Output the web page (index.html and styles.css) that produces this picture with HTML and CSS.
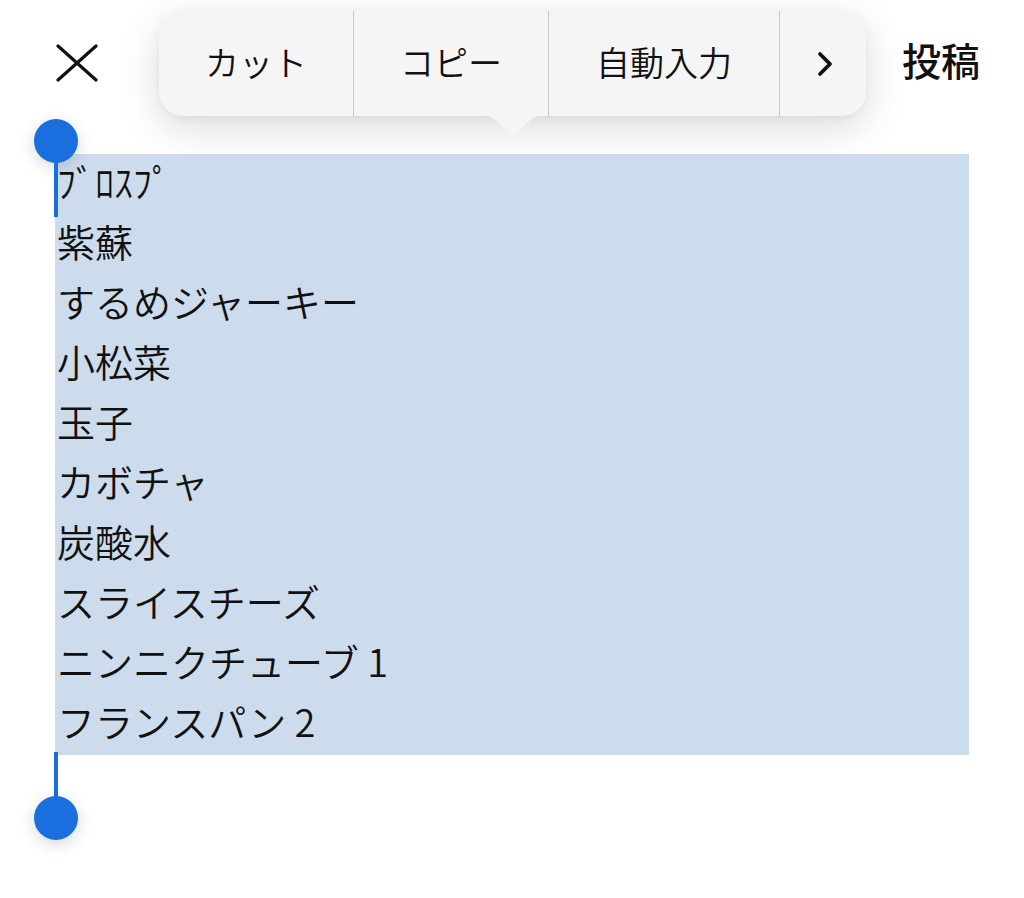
FILE: index.html
```html
<!DOCTYPE html>
<html lang="ja">
<head>
  <meta charset="UTF-8">
  <meta name="viewport" content="width=device-width, initial-scale=1.0">
  <title>投稿</title>
  <link rel="stylesheet" href="styles.css">
</head>
<body>
  <div class="header">
    <button class="close-btn" type="button" aria-label="閉じる">
      <svg width="42" height="38" viewBox="0 0 42 38">
        <path d="M2 2 L40 36 M40 2 L2 36" stroke="#111" stroke-width="3.2" stroke-linecap="round" fill="none"/>
      </svg>
    </button>
    <button class="post-btn" type="button">投稿</button>
  </div>

  <div class="edit-menu">
    <div class="menu-item">カット</div>
    <div class="menu-item">コピー</div>
    <div class="menu-item">自動入力</div>
    <div class="menu-item more">
      <svg width="18" height="26" viewBox="0 0 18 26">
        <path d="M4 3 L14 13 L4 23" stroke="#111" stroke-width="3.8" stroke-linecap="round" stroke-linejoin="round" fill="none"/>
      </svg>
    </div>
    <svg class="menu-arrow" width="70" height="22" viewBox="0 0 70 22">
      <path d="M0 0 L70 0 C58 0 54 3 48 9 L39 18 C36 21 34 21 31 18 L22 9 C16 3 12 0 0 0 Z" fill="#f5f5f5"/>
    </svg>
  </div>

  <div class="editor">
    <div class="selection">
      <div class="line">ﾌﾞﾛｽﾌﾟ</div>
      <div class="line">紫蘇</div>
      <div class="line">するめジャーキー</div>
      <div class="line">小松菜</div>
      <div class="line">玉子</div>
      <div class="line">カボチャ</div>
      <div class="line">炭酸水</div>
      <div class="line">スライスチーズ</div>
      <div class="line">ニンニクチューブ 1</div>
      <div class="line">フランスパン 2</div>
    </div>
    <div class="handle handle-start"><span class="knob"></span><span class="stem"></span></div>
    <div class="handle handle-end"><span class="stem"></span><span class="knob"></span></div>
  </div>
</body>
</html>
```

FILE: styles.css
```css
body {
  margin: 0;
  background: #fff;
  font-family: "Noto Sans CJK JP", "Noto Sans", sans-serif;
  color: #111;
  width: 1024px;
  height: 898px;
  overflow: hidden;
  position: relative;
}
.header {
  height: 126px;
  display: flex;
  align-items: center;
  justify-content: space-between;
  padding: 0 44px 0 56px;
}
button {
  background: none;
  border: none;
  padding: 0;
  font-family: inherit;
  color: #111;
  cursor: pointer;
}
.close-btn {
  display: flex;
}
.post-btn {
  font-size: 39px;
  font-weight: 500;
  margin-top: -8px;
}
.edit-menu {
  position: absolute;
  top: 11px;
  left: 159px;
  width: 707px;
  height: 105px;
  display: flex;
  background: #f5f5f5;
  border-radius: 24px;
  box-shadow: 0 12px 40px rgba(0, 0, 0, 0.14), 0 2px 8px rgba(0, 0, 0, 0.05);
}
.menu-item {
  box-sizing: border-box;
  display: flex;
  align-items: center;
  justify-content: center;
  font-size: 34px;
  font-weight: 350;
  border-right: 1px solid #c8c8c8;
  padding-bottom: 4px;
}
.menu-item:nth-child(1) { width: 195px; }
.menu-item:nth-child(2) { width: 195px; }
.menu-item:nth-child(3) { width: 231px; }
.menu-item.more {
  border-right: none;
  flex: 1;
  padding: 0 0 0 4px;
}
.menu-arrow {
  position: absolute;
  left: 319px;
  top: 104px;
}
.editor {
  padding-top: 28px;
  position: relative;
}
.selection {
  margin-left: 55px;
  width: 914px;
  background: #ccdcec;
  padding-bottom: 1px;
}
.line {
  height: 60px;
  line-height: 54px;
  font-size: 38px;
  font-weight: 350;
  padding-left: 2px;
  white-space: nowrap;
}
.handle {
  position: absolute;
  left: 34px;
  width: 44px;
  display: flex;
  flex-direction: column;
  align-items: center;
}
.handle-start {
  top: -7px;
}
.handle-end {
  top: 626px;
}
.knob {
  width: 44px;
  height: 44px;
  border-radius: 50%;
  background: #1a6fdf;
  box-shadow: 0 4px 16px rgba(0, 0, 0, 0.16);
}
.stem {
  width: 4px;
  background: #1a6fdf;
}
.handle-start .stem {
  height: 56px;
  margin-top: -2px;
}
.handle-end .stem {
  height: 46px;
  margin-bottom: -2px;
}
```
